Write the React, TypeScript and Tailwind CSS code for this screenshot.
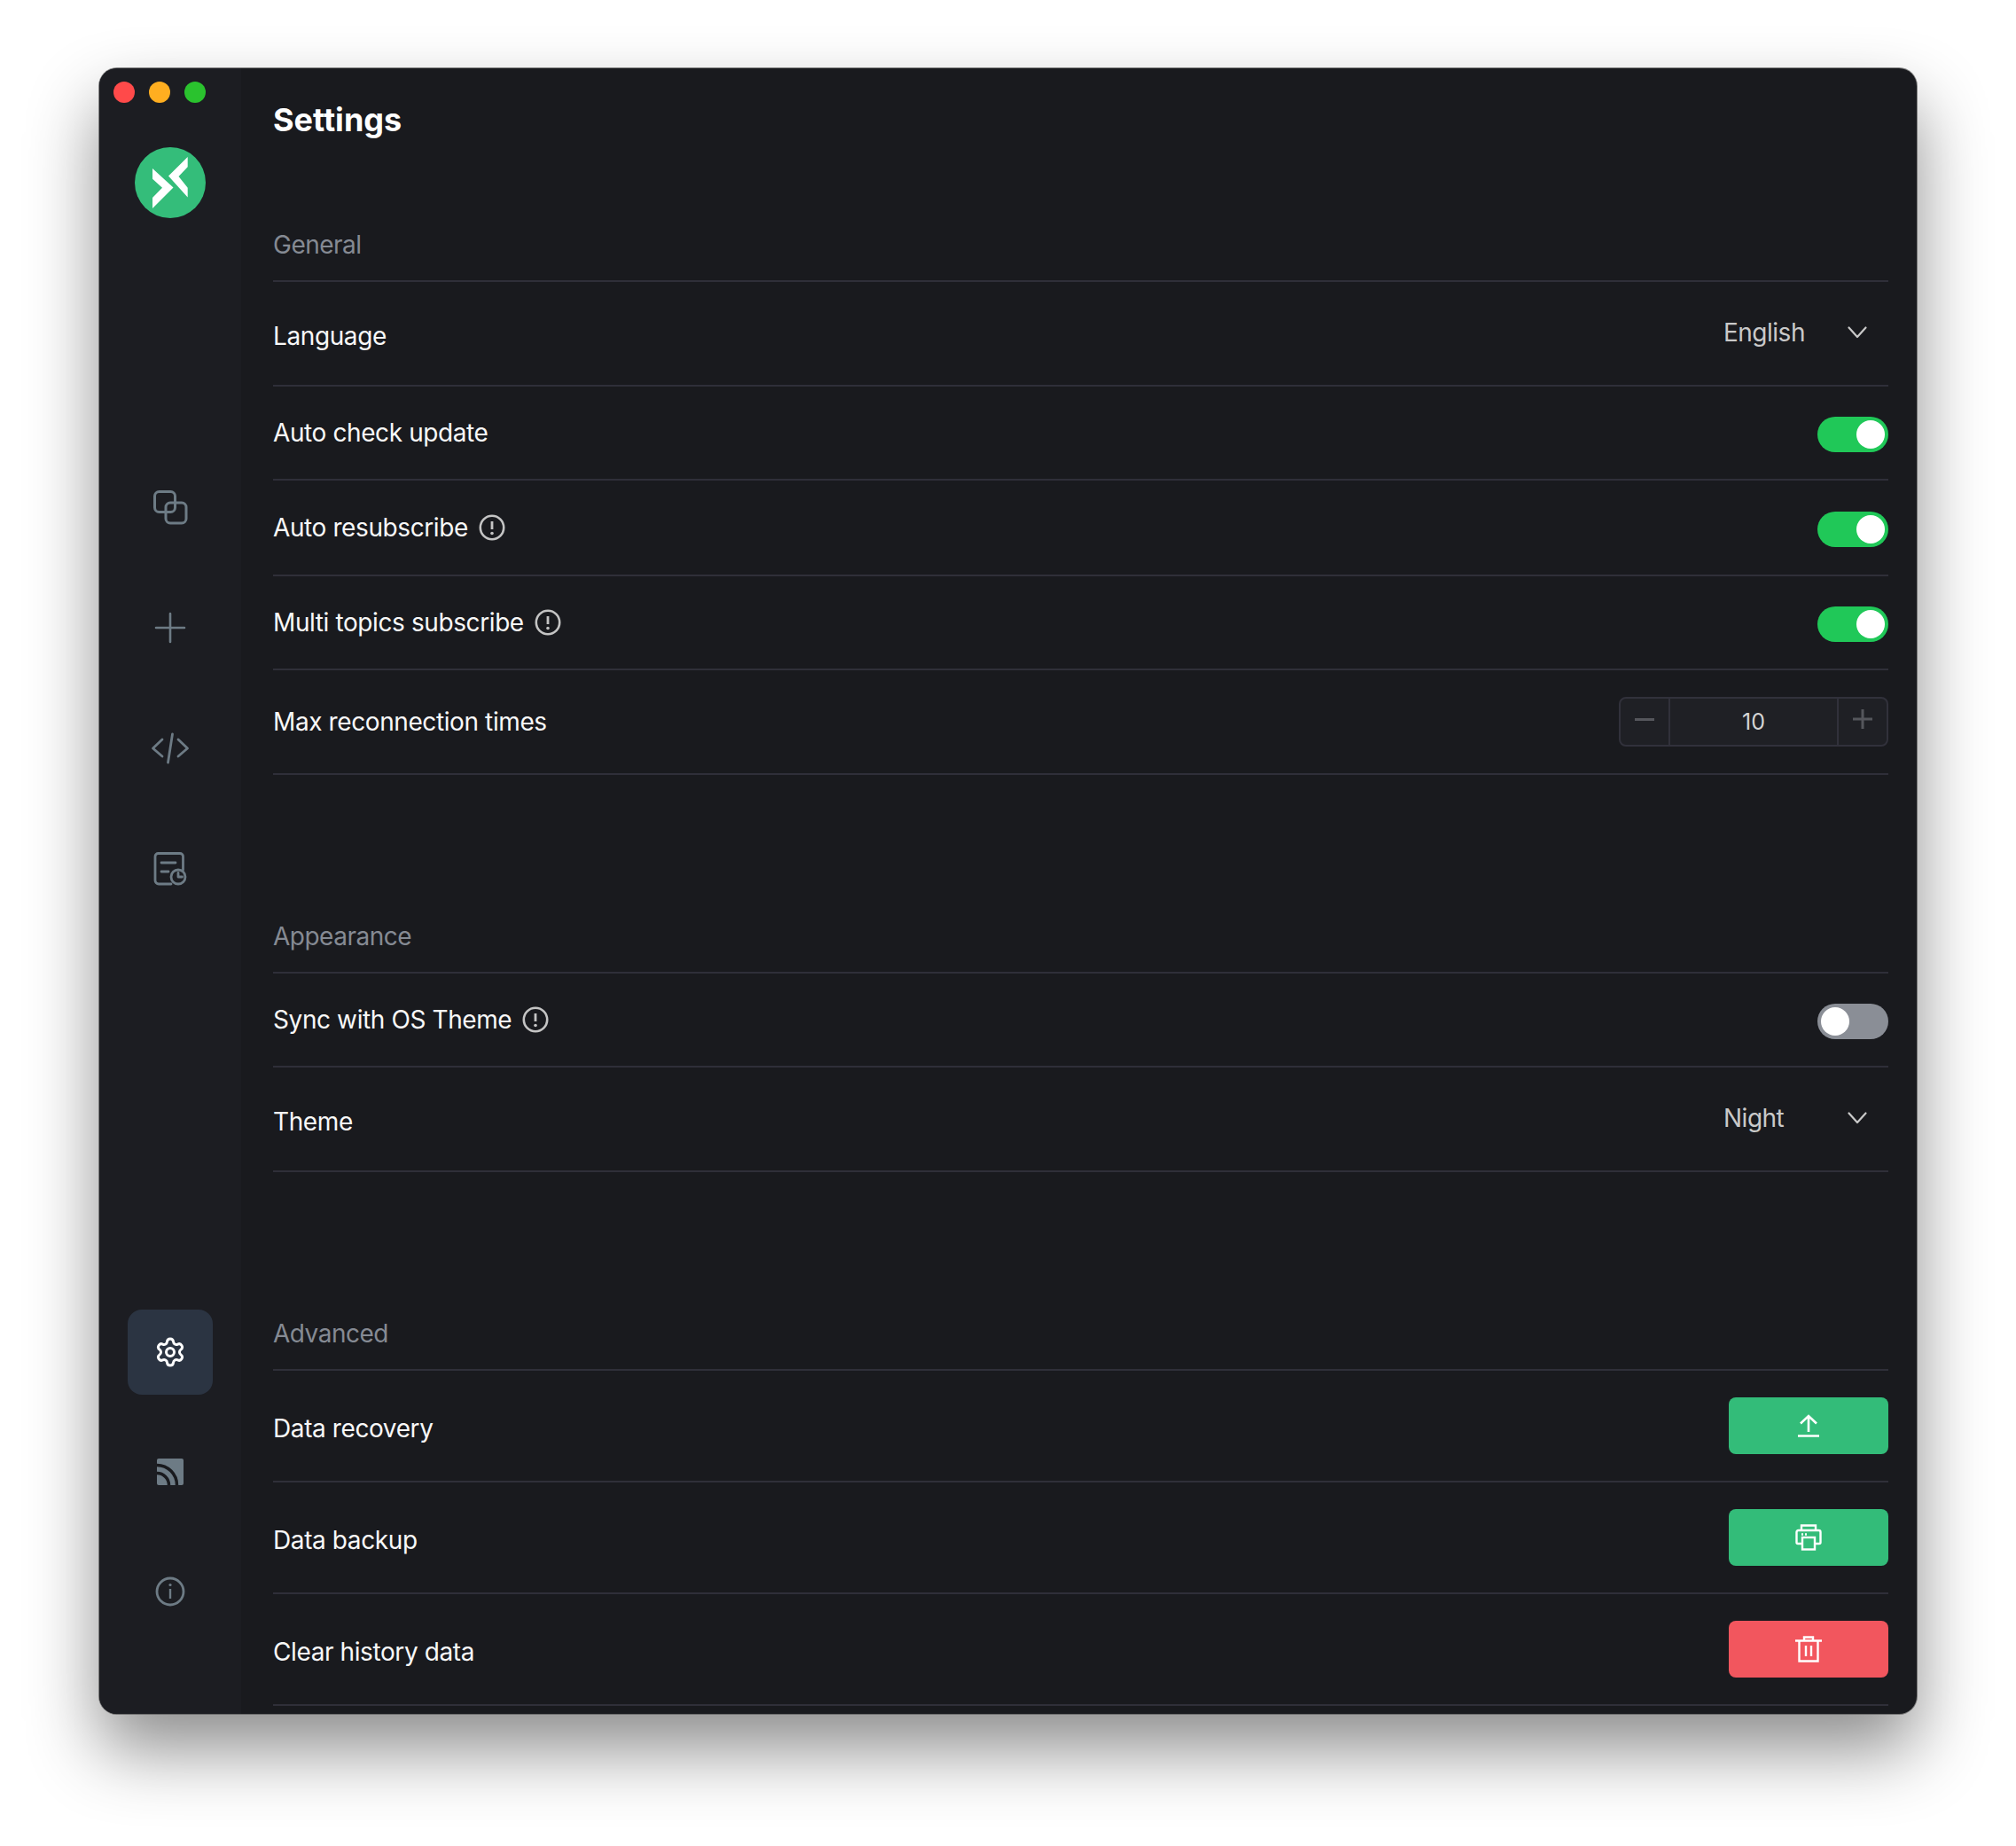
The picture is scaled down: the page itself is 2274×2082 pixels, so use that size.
import { Settings } from "lucide-react";
import type { ReactNode } from "react";

function NavItem({ children, active }: { children: ReactNode; active?: boolean }) {
  return (
    <div className={`flex h-[96px] w-[96px] items-center justify-center rounded-[16px] ${active ? "bg-[#2b3442]" : ""}`}>
      {children}
    </div>
  );
}

function CopyIcon() {
  return (
    <svg width="40" height="40" viewBox="0 0 40 40" fill="none" stroke="#6d7b85" strokeWidth="3">
      <rect x="2.5" y="2.5" width="23" height="23" rx="5" />
      <rect x="15" y="15" width="23" height="23" rx="5" />
    </svg>
  );
}

function PlusIcon() {
  return (
    <svg width="36" height="36" viewBox="0 0 36 36" fill="none" stroke="#6d7b85" strokeWidth="2.6" strokeLinecap="round">
      <path d="M18 2v32M2 18h32" />
    </svg>
  );
}

function CodeIcon() {
  return (
    <svg width="44" height="36" viewBox="0 0 44 36" fill="none" stroke="#6d7b85" strokeWidth="2.8" strokeLinecap="round" strokeLinejoin="round">
      <path d="M13 8 2.500 18 13 27M31 8l10.500 10L31 27M24.500 2l-5 32" />
    </svg>
  );
}

function LogIcon() {
  return (
    <svg width="38" height="38" viewBox="0 0 38 38" fill="none" stroke="#6d7b85" strokeWidth="2.8" strokeLinecap="round" strokeLinejoin="round">
      <path d="M20 36H6a4 4 0 0 1-4-4V5a3.500 3.500 0 0 1 3.500-3.500H30a3.500 3.500 0 0 1 3.500 3.500v15" />
      <path d="M9 12h16M9 22h8" />
      <circle cx="28" cy="28" r="8" />
      <path d="M28 23.500V28h4.500" />
    </svg>
  );
}

function RssIcon() {
  return (
    <svg width="30" height="30" viewBox="0 0 30 30" fill="none">
      <rect width="30" height="30" rx="2" fill="#6d7b85" />
      <circle cx="0" cy="30" r="13.500" stroke="#191a1e" strokeWidth="3.500" />
      <circle cx="0" cy="30" r="22.500" stroke="#191a1e" strokeWidth="3.500" />
    </svg>
  );
}

function InfoIcon() {
  return (
    <svg width="34" height="34" viewBox="0 0 34 34" fill="none" stroke="#6d7b85" strokeWidth="2.8">
      <circle cx="17" cy="17" r="15" />
      <path d="M17 14v11" strokeWidth="2.4" />
      <circle cx="17" cy="9.500" r="1.600" fill="#6d7b85" stroke="none" />
    </svg>
  );
}

function Logo() {
  return (
    <svg width="80" height="80" viewBox="0 0 80 80">
      <circle cx="40" cy="40" r="40" fill="#34bd7a" />
      <polygon points="20,24 43.500,45.500 20,69 20,57 31,45.700 20,35.700" fill="#fff" />
      <polygon points="59.700,11 38,32.500 59.700,56.500 59.700,45.700 49.500,33 59.700,22.300" fill="#fff" />
    </svg>
  );
}

function Toggle({ on = true }: { on?: boolean }) {
  return (
    <div className={`mt-[3px] flex h-[40px] w-[80px] items-center rounded-full p-[4px] ${on ? "justify-end bg-[#20c858]" : "justify-start bg-[#8a8e96]"}`}>
      <div className="h-[32px] w-[32px] rounded-full bg-white" />
    </div>
  );
}

function Tip() {
  return (
    <svg width="30" height="30" viewBox="0 0 30 30" fill="none" stroke="#c4c4c4" strokeWidth="2.600">
      <circle cx="15" cy="15" r="13.200" />
      <path d="M15 8v9" strokeWidth="2.800" />
      <circle cx="15" cy="21.500" r="1.800" fill="#c4c4c4" stroke="none" />
    </svg>
  );
}

function Select({ value }: { value: string }) {
  return (
    <div className="-mt-[2px] flex w-[186px] items-center justify-between pr-[24px]">
      <span className="text-[28px] leading-[40px] tracking-[-0.5px] text-[#c9c9c9]">{value}</span>
      <svg width="22" height="14" viewBox="0 0 22 14" fill="none" stroke="#c9c9c9" strokeWidth="2.200" strokeLinecap="round" strokeLinejoin="round">
        <path d="M1.500 1.500 11 12l9.500-10.500" />
      </svg>
    </div>
  );
}

function Stepper() {
  return (
    <div className="flex h-[56px] w-[304px] items-stretch rounded-[8px] border-2 border-[#31313b] bg-[#1f2025]">
      <div className="flex w-[54px] items-center justify-center pb-[6px]">
        <div className="h-[3px] w-[22px] bg-[#55565c]" />
      </div>
      <div className="flex flex-1 items-center justify-center border-x-2 border-[#31313b] pt-[1px] text-[25px] text-[#d4d4d4]">10</div>
      <div className="flex w-[54px] items-center justify-center pb-[6px]">
        <svg width="22" height="22" viewBox="0 0 22 22" stroke="#55565c" strokeWidth="3">
          <path d="M11 0v22M0 11h22" />
        </svg>
      </div>
    </div>
  );
}

function ActionButton({ red, children }: { red?: boolean; children: ReactNode }) {
  return (
    <div className={`flex h-[64px] w-[180px] items-center justify-center rounded-[8px] ${red ? "bg-[#f2565e]" : "bg-[#33bc79]"}`}>
      {children}
    </div>
  );
}

function Row({ label, tip, height, lower, children }: { label: string; tip?: boolean; height: string; lower?: boolean; children: ReactNode }) {
  return (
    <div className={`flex items-center justify-between border-b-2 border-[#2f2f39] ${height}`}>
      <div className={`flex items-center gap-[12px] text-[28px] leading-[40px] tracking-[-0.4px] text-[#f8f8f8] ${lower ? "mt-[5px]" : ""}`}>
        <span>{label}</span>
        {tip && <Tip />}
      </div>
      {children}
    </div>
  );
}

function SectionTitle({ children }: { children: string }) {
  return (
    <div className="border-b-2 border-[#2f2f39] pb-[20px] text-[28px] leading-[40px] tracking-[-0.5px] text-[#858a93]">{children}</div>
  );
}

export default function App() {
  return (
    <div className="h-[2082px] w-[2274px] bg-white pl-[112px] pt-[77px] font-['Inter',sans-serif]">
      <div className="flex h-[1856px] w-[2050px] overflow-hidden rounded-[20px] bg-[#191a1e] shadow-[0_0_0_1px_rgba(90,90,90,0.7),0_40px_80px_rgba(0,0,0,0.45)]">
        <aside className="flex w-[160px] shrink-0 flex-col items-center bg-[#1c1d22]">
          <div className="flex w-full gap-[16px] pl-[16px] pt-[15px]">
            <div className="h-[24px] w-[24px] rounded-full bg-[#ff4a4a]" />
            <div className="h-[24px] w-[24px] rounded-full bg-[#ffae20]" />
            <div className="h-[24px] w-[24px] rounded-full bg-[#2ac22e]" />
          </div>
          <div className="mt-[50px]">
            <Logo />
          </div>
          <div className="mt-[278px] flex flex-col gap-[40px]">
            <NavItem><CopyIcon /></NavItem>
            <NavItem><PlusIcon /></NavItem>
            <NavItem><CodeIcon /></NavItem>
            <NavItem><LogIcon /></NavItem>
          </div>
          <div className="mt-auto mb-[90px] flex flex-col gap-[39px]">
            <NavItem active><Settings size={36} color="#ffffff" strokeWidth={2} /></NavItem>
            <NavItem><RssIcon /></NavItem>
            <NavItem><InfoIcon /></NavItem>
          </div>
        </aside>

        <main className="flex-1 pl-[36px] pr-[32px] pt-[36px]">
          <h1 className="text-[36px] font-bold leading-[44px] text-white">Settings</h1>

          <section className="mt-[99px]">
            <SectionTitle>General</SectionTitle>
            <Row label="Language" height="h-[118px]" lower><Select value="English" /></Row>
            <Row label="Auto check update" height="h-[106px]"><Toggle /></Row>
            <Row label="Auto resubscribe" tip height="h-[108px]"><Toggle /></Row>
            <Row label="Multi topics subscribe" tip height="h-[106px]"><Toggle /></Row>
            <Row label="Max reconnection times" height="h-[118px]"><Stepper /></Row>
          </section>

          <section className="mt-[162px]">
            <SectionTitle>Appearance</SectionTitle>
            <Row label="Sync with OS Theme" tip height="h-[106px]"><Toggle on={false} /></Row>
            <Row label="Theme" height="h-[118px]" lower><Select value="Night" /></Row>
          </section>

          <section className="mt-[162px]">
            <SectionTitle>Advanced</SectionTitle>
            <Row label="Data recovery" height="h-[126px]" lower>
              <ActionButton>
                <svg width="28" height="28" viewBox="0 0 28 28" fill="none" stroke="#fff" strokeWidth="2.600">
                  <path d="M14 21V3M5 11.500 14 3l9 8.500M2 25.500h24" />
                </svg>
              </ActionButton>
            </Row>
            <Row label="Data backup" height="h-[126px]" lower>
              <ActionButton>
                <svg width="30" height="30" viewBox="0 0 30 30" fill="none" stroke="#fff" strokeWidth="2.400">
                  <path d="M7 7V1.500h16V7M8 22H3a1.500 1.500 0 0 1-1.500-1.500V9A2 2 0 0 1 3.500 7h23a2 2 0 0 1 2 2v11.500A1.500 1.500 0 0 1 27 22h-5" />
                  <rect x="8" y="15" width="14" height="13.500" />
                  <path d="M7 11.500h2M11 11.500h2" />
                </svg>
              </ActionButton>
            </Row>
            <Row label="Clear history data" height="h-[126px]" lower>
              <ActionButton red>
                <svg width="30" height="30" viewBox="0 0 30 30" fill="none" stroke="#fff" strokeWidth="2.400">
                  <path d="M0 5.500h30M10 5.500V1.500h10v4M4.500 5.500v23h21v-23M12 11v12M18 11v12" />
                </svg>
              </ActionButton>
            </Row>
          </section>
        </main>
      </div>
    </div>
  );
}
